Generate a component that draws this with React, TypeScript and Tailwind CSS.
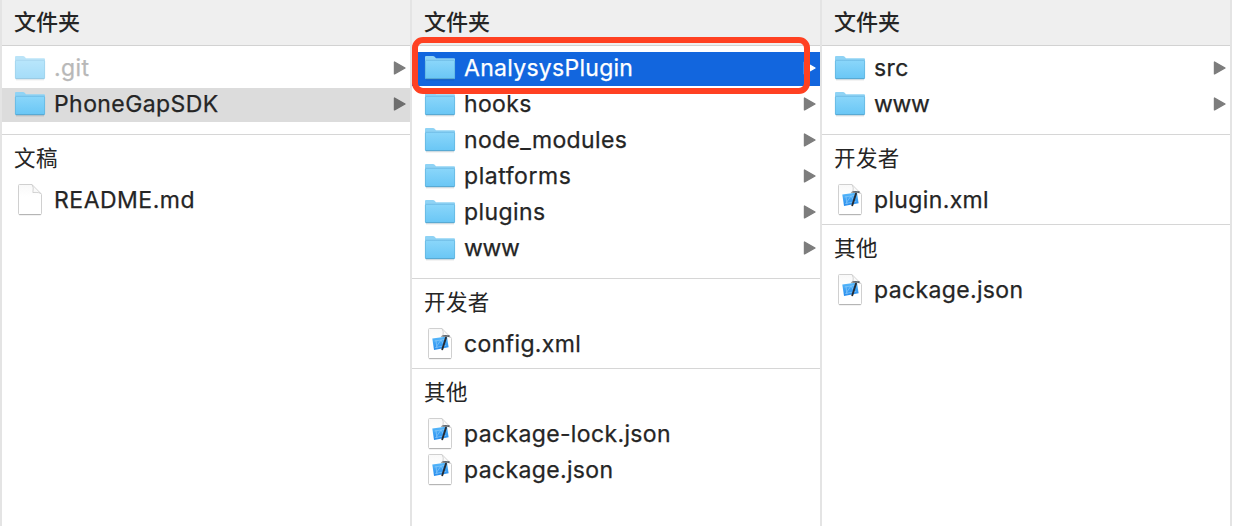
import type { ReactNode } from "react";

type Kind = "folder" | "blank" | "xcode";
type Entry = { name: string; kind: Kind; state?: "dimmed" | "open" | "active"; tracking?: string };
type Group = { title: string; entries: Entry[] };

const columns: Group[][] = [
  [
    {
      title: "文件夹",
      entries: [
        { name: ".git", kind: "folder", state: "dimmed", tracking: "tracking-[0.4px]" },
        { name: "PhoneGapSDK", kind: "folder", state: "open", tracking: "tracking-[0.42px]" },
      ],
    },
    { title: "文稿", entries: [{ name: "README.md", kind: "blank", tracking: "tracking-[0.5px]" }] },
  ],
  [
    {
      title: "文件夹",
      entries: [
        { name: "AnalysysPlugin", kind: "folder", state: "active", tracking: "tracking-[0.28px]" },
        { name: "hooks", kind: "folder" },
        { name: "node_modules", kind: "folder" },
        { name: "platforms", kind: "folder", tracking: "tracking-[0.55px]" },
        { name: "plugins", kind: "folder", tracking: "tracking-[0.4px]" },
        { name: "www", kind: "folder", tracking: "tracking-[-0.3px]" },
      ],
    },
    { title: "开发者", entries: [{ name: "config.xml", kind: "xcode" }] },
    {
      title: "其他",
      entries: [
        { name: "package-lock.json", kind: "xcode" },
        { name: "package.json", kind: "xcode" },
      ],
    },
  ],
  [
    {
      title: "文件夹",
      entries: [
        { name: "src", kind: "folder" },
        { name: "www", kind: "folder", tracking: "tracking-[-0.3px]" },
      ],
    },
    { title: "开发者", entries: [{ name: "plugin.xml", kind: "xcode" }] },
    { title: "其他", entries: [{ name: "package.json", kind: "xcode" }] },
  ],
];

function Folder() {
  return (
    <svg width="32" height="28" viewBox="0 0 32 28" className="block">
      <path d="M2 25.8H30" stroke="#000" strokeOpacity=".12" strokeWidth="1.2" />
      <path d="M1 3Q1 2 2 2H9Q10 2 10.7 2.8L12 4.2H30Q31 4.2 31 5.2V8H1Z" fill="#8fd3f5" />
      <path d="M1 6.5H31V24Q31 25 30 25H2Q1 25 1 24Z" fill="url(#folderFace)" />
      <path d="M1.2 6.3H30.8" stroke="#69b9e2" strokeWidth=".8" />
      <path d="M1.4 7V24M30.6 7V24" stroke="#62b3dc" strokeWidth=".7" />
      <path d="M1.6 24.7H30.4" stroke="#559fc7" strokeWidth=".9" />
    </svg>
  );
}

function Page({ children }: { children?: ReactNode }) {
  return (
    <svg width="32" height="34" viewBox="0 0 32 34" className="block">
      <path d="M5 2H18L27.5 12V31H5Z" fill="url(#pageFace)" />
      <path d="M18 1.5H5.5Q4.5 1.5 4.5 2.5V30.5Q4.5 31.5 5.5 31.5H26.5Q27.5 31.5 27.5 30.5V11.5" fill="none" stroke="#cbcbcb" strokeWidth=".9" />
      <path d="M5.2 31.7H26.8" stroke="#a6a6a6" strokeWidth=".8" />
      <path d="M18 1.5L27.5 11.2Q26 9 18.9 9.5Q20 4 18 1.5Z" fill="#fafafa" stroke="#c8c8c8" strokeWidth=".8" />
      {children}
    </svg>
  );
}

function Xcode() {
  return (
    <Page>
      <path d="M8.3 11.6L23 9.6L24.6 20.3L10 23Z" fill="url(#blueprint)" />
      <path d="M10.5 14L22 12.2M11.2 20.6L22.2 18.4M12 13.5L13 21.3M12.4 19.6L17 13L20.6 18.8" fill="none" stroke="#93cefb" strokeWidth=".6" />
      <path d="M18.3 22.3L22 10.6" stroke="#252a32" strokeWidth="1.9" strokeLinecap="round" />
      <path d="M16.8 9.2Q20 7.4 24 8.2L25.5 8V10.2L23.6 9.8L17 9.6Z" fill="#5d6268" />
    </Page>
  );
}

function Arrow({ color }: { color: string }) {
  return (
    <svg width="14" height="16" viewBox="0 0 14 16" className="block shrink-0">
      <path d="M1.5 2.1V13.9L12 8Z" fill={color} stroke={color} strokeWidth="1.4" strokeLinejoin="round" />
    </svg>
  );
}

function Row({ entry }: { entry: Entry }) {
  const { name, kind, state } = entry;
  const bg = state === "active" ? "bg-[#1266de]" : state === "open" ? "bg-[#dcdcdc]" : "";
  const text = state === "active" ? "text-white" : state === "dimmed" ? "text-[#b8b8b8]" : "text-[#252525]";
  return (
    <div className={`flex h-[34px] items-center pr-[3px] pl-3 ${kind === "folder" ? "pb-0.5" : ""} ${bg} ${text}`}>
      <span className={`w-8 shrink-0 ${state === "dimmed" ? "opacity-60" : ""}`}>
        {kind === "folder" ? <Folder /> : kind === "xcode" ? <Xcode /> : <Page />}
      </span>
      <span
        className={`ml-2 flex-1 text-[23px] leading-[34px] whitespace-nowrap [-webkit-text-stroke:0.25px_currentColor] ${entry.tracking ?? "tracking-[0.36px]"}`}
      >
        {name}
      </span>
      {kind === "folder" && <Arrow color={state === "active" ? "#ffffff" : state === "open" ? "#6e6e6e" : "#7d7d7d"} />}
    </div>
  );
}

function Column({ groups }: { groups: Group[] }) {
  const [folders, ...rest] = groups;
  return (
    <section className="box-content w-[408px] border-r-2 border-[#e4e4e4]">
      <h2 className="h-[46px] border-b-[1.5px] border-[#d2d2d2] bg-[#efefef] pl-3 text-[22px] leading-[44px] font-medium text-[#252525]">
        {folders.title}
      </h2>
      <div className="flex flex-col gap-0.5 pt-1.5 pb-3">
        {folders.entries.map((e) => (
          <Row key={e.name} entry={e} />
        ))}
      </div>
      {rest.map((g) => (
        <div key={g.title} className="border-t border-[#d6d6d6] pb-[7px]">
          <h3 className="h-12 pl-3 text-[21.5px] leading-[46px] tracking-[0.4px] text-[#252525]">{g.title}</h3>
          <div className="flex flex-col gap-0.5">
            {g.entries.map((e) => (
              <Row key={e.name} entry={e} />
            ))}
          </div>
        </div>
      ))}
    </section>
  );
}

export default function App() {
  return (
    <main className="relative flex h-[526px] w-[1242px] overflow-hidden border-l-2 border-[#e4e4e4] bg-white font-['Inter','Noto_Sans_CJK_SC',sans-serif]">
      <svg width="0" height="0" className="absolute">
        <defs>
          <linearGradient id="folderFace" x1="0" y1="0" x2="0" y2="1">
            <stop stopColor="#8ad6fa" />
            <stop offset="1" stopColor="#69c6f5" />
          </linearGradient>
          <linearGradient id="pageFace" x1="0" y1="0" x2="0" y2="1">
            <stop stopColor="#f9f9f9" />
            <stop offset=".4" stopColor="#ffffff" />
          </linearGradient>
          <linearGradient id="blueprint" x1="0" y1="0" x2="0" y2="1">
            <stop stopColor="#58b9fa" />
            <stop offset="1" stopColor="#268bed" />
          </linearGradient>
        </defs>
      </svg>
      {columns.map((groups, i) => (
        <Column key={i} groups={groups} />
      ))}
      <div className="absolute top-[37px] left-[410px] h-[57px] w-[398px] rounded-[11px] border-[6px] border-[#ff4122]" />
    </main>
  );
}
